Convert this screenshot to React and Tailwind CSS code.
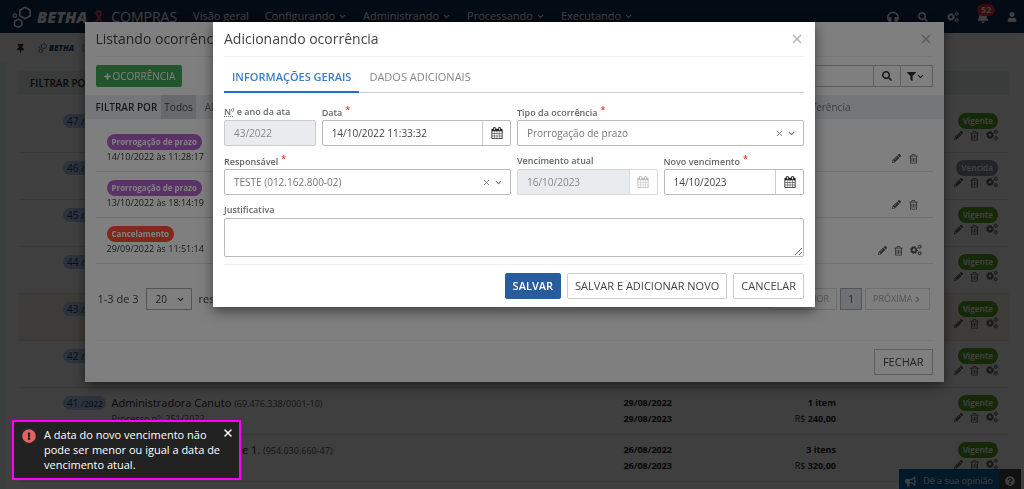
import React, { useState } from 'react';
import { FaBell, FaBullhorn, FaExclamationCircle, FaFilter, FaHeadphones, FaPencilAlt, FaQuestionCircle, FaSearch, FaThumbtack, FaUser } from 'react-icons/fa';
import { ChevronDown, ChevronLeft, ChevronRight, Plus, X } from 'lucide-react';

const menus = ['Configurando', 'Administrando', 'Processando', 'Executando'];

const atas = [
    { number: 47, status: 'Vigente' },
    { number: 46, status: 'Vencida' },
    { number: 45, status: 'Vigente' },
    { number: 44, status: 'Vigente' },
    { number: 43, status: 'Vigente', selected: true },
    { number: 42, status: 'Vigente' },
    { number: 41, status: 'Vigente', supplier: 'Administradora Canuto', document: '69.476.338/0001-10', process: '251/2022', start: '29/08/2022', end: '29/08/2023', items: '1 item', total: '240,00' },
    { number: 40, status: 'Vigente', supplier: 'Fornecedor Exemplo Teste 1.', document: '954.030.660-47', start: '26/08/2022', end: '26/08/2023', items: '3 itens', total: '320,00' },
];

const occurrences = [
    { type: 'Prorrogação de prazo', date: '14/10/2022 às 11:28:17', color: 'bg-[#b565cf]' },
    { type: 'Prorrogação de prazo', date: '13/10/2022 às 18:14:19', color: 'bg-[#b565cf]' },
    { type: 'Cancelamento', date: '29/09/2022 às 11:51:14', color: 'bg-[#ff5338]', canConfigure: true },
];

function TrashIcon({ className }) {
    return (
        <svg viewBox="0 0 1408 1792" fill="currentColor" className={className} aria-hidden="true">
            <path d="M512 800v576q0 14-9 23t-23 9h-64q-14 0-23-9t-9-23v-576q0-14 9-23t23-9h64q14 0 23 9t9 23zm256 0v576q0 14-9 23t-23 9h-64q-14 0-23-9t-9-23v-576q0-14 9-23t23-9h64q14 0 23 9t9 23zm256 0v576q0 14-9 23t-23 9h-64q-14 0-23-9t-9-23v-576q0-14 9-23t23-9h64q14 0 23 9t9 23zm128 724v-948h-896v948q0 22 7 40.5t14.5 27 10.5 8.5h832q3 0 10.5-8.5t14.5-27 7-40.5zm-672-1076h448l-48-117q-7-9-17-11h-317q-10 2-17 11zm928 32v64q0 14-9 23t-23 9h-96v948q0 83-47 143.5t-113 60.5h-832q-66 0-113-58.5t-47-141.5v-952h-96q-14 0-23-9t-9-23v-64q0-14 9-23t23-9h309l70-167q15-37 54-63t79-26h320q40 0 79 26t54 63l70 167h309q14 0 23 9t9 23z" />
        </svg>
    );
}

function CalendarIcon({ className }) {
    return (
        <svg viewBox="0 0 1792 1792" fill="currentColor" className={className} aria-hidden="true">
            <path d="M192 1664h288v-288h-288v288zm352 0h320v-288h-320v288zm-352-352h288v-320h-288v320zm352 0h320v-320h-320v320zm-352-384h288v-288h-288v288zm736 736h320v-288h-320v288zm-384-736h320v-288h-320v288zm768 736h288v-288h-288v288zm-384-352h320v-320h-320v320zm-352-864v-288q0-13-9.5-22.5t-22.5-9.5h-64q-13 0-22.5 9.5t-9.5 22.5v288q0 13 9.5 22.5t22.5 9.5h64q13 0 22.5-9.5t9.5-22.5zm736 864h288v-320h-288v320zm-384-384h320v-288h-320v288zm384 0h288v-288h-288v288zm32-480v-288q0-13-9.5-22.5t-22.5-9.5h-64q-13 0-22.5 9.5t-9.5 22.5v288q0 13 9.5 22.5t22.5 9.5h64q13 0 22.5-9.5t9.5-22.5zm384-64v1280q0 52-38 90t-90 38h-1408q-52 0-90-38t-38-90v-1280q0-52 38-90t90-38h128v-96q0-66 47-113t113-47h64q66 0 113 47t47 113v96h384v-96q0-66 47-113t113-47h64q66 0 113 47t47 113v96h128q52 0 90 38t38 90z" />
        </svg>
    );
}

// one large gear with two small ones on its right
function CogsIcon({ className }) {
    return (
        <svg viewBox="0 0 24 24" fill="none" stroke="currentColor" className={className} aria-hidden="true">
            <circle cx="8" cy="12" r="4.600" strokeWidth="3.400" />
            <circle cx="8" cy="12" r="7" strokeWidth="2" strokeDasharray="2.750 2.750" />
            <circle cx="19.500" cy="5.500" r="2.500" strokeWidth="2" />
            <circle cx="19.500" cy="18.500" r="2.500" strokeWidth="2" />
            <circle cx="19.500" cy="5.500" r="4" strokeWidth="1.200" strokeDasharray="2.100 2.100" />
            <circle cx="19.500" cy="18.500" r="4" strokeWidth="1.200" strokeDasharray="2.100 2.100" />
        </svg>
    );
}

function BethaMark({ className }) {
    return (
        <svg viewBox="0 0 20 22" fill="none" stroke="currentColor" className={className} aria-hidden="true">
            <path d="M13 1.2l5.2 3v5.6l-5.2 3-5.2-3V4.200z" strokeWidth="1.6" />
            <path d="M6.200 13.200l3.600 2.100v4l-3.600 2.100-3.600-2.100v-4z" strokeWidth="1.500" />
            <path d="M2.800 7.800l1.600.9v1.900l-1.600.9-1.600-.9V8.700z" strokeWidth="1.200" />
        </svg>
    );
}

function RibbonIcon() {
    return (
        <svg viewBox="0 0 10 14" fill="none" stroke="#f0507a" strokeWidth="2" className="w-[10px] h-[14px]" aria-hidden="true">
            <path d="M9 13.500L3 5C1.800 3 2.500 1.200 4.600 1.200S7.600 3 6.600 5L1.500 13" />
        </svg>
    );
}

function RowActions({ withCogs }) {
    return (
        <div className={`flex items-center justify-end text-[#555] ${withCogs ? 'gap-[7px]' : 'gap-2 mr-1'}`}>
            <button type="button" aria-label="Editar"><FaPencilAlt className="size-[9px]" /></button>
            <button type="button" aria-label="Excluir"><TrashIcon className="w-[9px] h-[11px]" /></button>
            {withCogs && <button type="button" aria-label="Opções"><CogsIcon className="size-3" /></button>}
        </div>
    );
}

function Navbar() {
    return (
        <header className="flex items-center h-[33px] pl-3 pr-[7px] bg-[#0f2c50] text-white">
            <BethaMark className="w-5 h-[22px]" />
            <span className="ml-[5px] text-[16px] leading-none font-extrabold italic">BETHA</span>
            <span className="ml-[7px]"><RibbonIcon /></span>
            <span className="ml-[7px] text-sm leading-none">COMPRAS</span>
            <nav className="flex items-center gap-4 ml-4 text-[11px]">
                <a href="#">Visão geral</a>
                {menus.map(menu => (
                    <a key={menu} href="#" className="flex items-center gap-[3px]">
                        {menu}
                        <ChevronDown className="size-[9px]" strokeWidth={3} />
                    </a>
                ))}
            </nav>
            <div className="flex items-center gap-[18px] ml-auto">
                <button type="button" aria-label="Suporte"><FaHeadphones className="size-3" /></button>
                <button type="button" aria-label="Buscar"><FaSearch className="size-[10px] mx-px" /></button>
                <button type="button" aria-label="Configurações"><CogsIcon className="size-3" /></button>
                <button type="button" aria-label="Notificações" className="relative">
                    <FaBell className="size-3" />
                    <span className="absolute -top-[7px] left-0 px-1 rounded-full bg-[#e8333a] text-[9px] leading-[12px] font-bold">52</span>
                </button>
                <button type="button" aria-label="Usuário"><FaUser className="size-[10px]" /></button>
            </div>
        </header>
    );
}

function AtaRow({ ata }) {
    return (
        <li className={`flex h-[47px] pl-11 pr-[11px] pt-[7px] border-b border-[#e4e4e4] ${ata.selected ? 'bg-[#f8f1e2]' : ''}`}>
            <span className="h-[14px] mt-px px-1 rounded-full bg-[#b4cdf5] text-[#1d3c6e] text-[10px] leading-[14px] whitespace-nowrap">
                {ata.number} <span className="text-[8px] font-semibold">/2022</span>
            </span>
            <div className="flex-1 ml-[5px] text-[#222]">
                {ata.supplier && (
                    <p className="text-[11px] leading-4">{ata.supplier} <span className="text-[9px] text-[#555]">({ata.document})</span></p>
                )}
                {ata.process && <p className="text-[9px] leading-[14px] text-[#555]">Processo nº: {ata.process}</p>}
            </div>
            <div className="text-right text-[9px] leading-4 font-bold text-[#222]">
                <p>{ata.start}</p>
                <p>{ata.end}</p>
            </div>
            <div className="w-[164px] text-right text-[9px] leading-4 font-bold text-[#222]">
                <p>{ata.items}</p>
                {ata.total && <p><span className="font-normal">R$</span> {ata.total}</p>}
            </div>
            <div className="w-[162px]">
                <span className={`block w-fit ml-auto px-[5px] rounded-full text-[8px] leading-4 font-bold text-white ${ata.status === 'Vencida' ? 'bg-[#8790a5]' : 'bg-[#56a01e]'}`}>{ata.status}</span>
                <RowActions withCogs />
            </div>
        </li>
    );
}

function AtasPage() {
    return (
        <div className="h-screen flex flex-col overflow-hidden bg-white">
            <Navbar />
            <div className="flex items-center h-[30px] pl-4 text-[#23406e]">
                <FaThumbtack className="size-[9px] text-[#333]" />
                <BethaMark className="w-[9px] h-[10px] ml-[13px]" />
                <span className="ml-[2px] text-[8px] font-extrabold italic">BETHA</span>
                <span className="w-2 h-2 ml-2 bg-[#f3c6cf]" />
            </div>
            <div className="flex flex-1 min-h-0">
                <aside className="w-[5px] bg-[#eef3f1]" />
                <main className="flex-1 px-[14px] pt-2 mr-px">
                    <div className="h-6 pl-[11px] mb-[11px] bg-[#e9eeee] text-[10px] leading-6 font-semibold text-[#222]">FILTRAR POR</div>
                    <ul>
                        {atas.map(ata => <AtaRow key={ata.number} ata={ata} />)}
                    </ul>
                </main>
            </div>
            <div className="fixed -bottom-1 right-[3px] flex h-6 text-[9px] text-white">
                <button type="button" className="flex items-center gap-[7px] px-[6px] bg-[#0a66a8]">
                    <FaBullhorn className="size-[11px]" />
                    Dê a sua opinião
                </button>
                <button type="button" aria-label="Ajuda" className="px-[6px] bg-[#444]"><FaQuestionCircle className="size-[10px]" /></button>
            </div>
        </div>
    );
}

function ModalHeader({ title }) {
    return (
        <div className="flex items-center justify-between h-[35px] border-b border-[#f2f2f2]">
            <h2 className="text-sm leading-none text-[#444]">{title}</h2>
            <button type="button" aria-label="Fechar" className="text-[#bbb]"><X className="size-[14px]" strokeWidth={3} /></button>
        </div>
    );
}

function OccurrencesModal() {
    return (
        <div className="fixed inset-0 flex items-start justify-center pt-[22px] pl-1 bg-black/50">
            <section className="w-full max-w-[859px] bg-white shadow-[0_4px_12px_rgba(0,0,0,0.5)]">
                <div className="px-[11px]">
                    <ModalHeader title="Listando ocorrências" />
                    <div className="flex justify-between h-[38px] py-2">
                        <button type="button" className="flex items-center gap-px px-[7px] rounded-xs bg-[#44a85b] text-[10px] text-white">
                            <Plus className="size-[9px]" strokeWidth={4} />
                            OCORRÊNCIA
                        </button>
                        <div className="flex text-[#333]">
                            <input type="text" aria-label="Pesquisar ocorrências" className="w-[300px] px-2 border border-[#bbb] text-[10px]" />
                            <button type="button" aria-label="Pesquisar" className="flex items-center justify-center w-[26px] border-y border-[#bbb]"><FaSearch className="size-[10px]" /></button>
                            <button type="button" aria-label="Filtrar" className="flex items-center justify-center w-[33px] border border-[#bbb]">
                                <FaFilter className="size-[9px]" />
                                <ChevronDown className="size-[9px]" strokeWidth={3} />
                            </button>
                        </div>
                    </div>
                </div>
                <div className="flex h-6 pl-[11px] bg-[#e9ecf0] text-[10px] leading-6 text-[#777]">
                    <span className="mr-1 font-semibold text-[#333]">FILTRAR POR</span>
                    <button type="button" className="px-[3px] mr-[9px] bg-[#cfd4da] text-[#444]">Todos</button>
                    <button type="button">Alteração</button>
                    <button type="button" className="ml-auto mr-[93px]">Transferência</button>
                </div>
                <div className="px-[11px] pt-[7px]">
                    <ul>
                        {occurrences.map(item => (
                            <li key={item.date} className="flex items-end justify-between h-[46px] px-[11px] pb-[7px] border-b border-[#e2e2e2]">
                                <div>
                                    <span className={`block w-fit px-[5px] rounded-full text-[8px] leading-4 font-bold text-white ${item.color}`}>{item.type}</span>
                                    <span className="block text-[9px] leading-[14px] text-[#333]">{item.date}</span>
                                </div>
                                <RowActions withCogs={item.canConfigure} />
                            </li>
                        ))}
                    </ul>
                    <div className="flex items-center h-[22px] mt-[24px] mb-[30px] pr-[3px] text-[11px] text-[#444]">
                        <label htmlFor="pageSize" className="pl-[2px]">1-3 de 3</label>
                        <span className="flex items-center h-full mx-[7px] border border-[#aaa] w-[46px]">
                            <select id="pageSize" className="appearance-none w-full pl-[9px] text-[10px]"><option>20</option></select>
                            <ChevronDown className="shrink-0 size-[9px] mr-[6px]" strokeWidth={3} />
                        </span>
                        resultados
                        <div className="flex gap-[3px] h-full ml-auto text-[9px] text-[#aaa]">
                            <button type="button" className="flex items-center px-[7px] border border-[#ddd]"><ChevronLeft className="size-[9px]" strokeWidth={3} />ANTERIOR</button>
                            <button type="button" className="w-[22px] border border-[#aaa] bg-[#dfe3e8] text-[10px] text-[#444]">1</button>
                            <button type="button" className="flex items-center px-[7px] border border-[#ddd]">PRÓXIMA<ChevronRight className="size-[9px]" strokeWidth={3} /></button>
                        </div>
                    </div>
                    <div className="flex justify-end pt-2 pb-[7px] border-t border-[#f0f0f0]">
                        <button type="button" className="h-[26px] px-2 border border-[#bbb] text-[11px] text-[#444]">FECHAR</button>
                    </div>
                </div>
            </section>
        </div>
    );
}

function Field({ id, label, required, className, children }) {
    return (
        <div className={className}>
            <label htmlFor={id} className="block h-[15px] text-[9px] leading-[14px] font-semibold text-[#666]">
                {label}
                {required && <span className="ml-[3px] align-[3px] leading-none text-[#e8352e]">*</span>}
            </label>
            {children}
        </div>
    );
}

function DateInput({ id, defaultValue, disabled }) {
    return (
        <div className={`flex h-[26px] rounded-xs border ${disabled ? 'border-[#d8d8d8]' : 'border-[#bbb]'}`}>
            <input id={id} type="text" defaultValue={defaultValue} disabled={disabled} className="flex-1 min-w-0 px-[9px] text-[10px] text-[#444] disabled:bg-[#e9ebef] disabled:text-[#888]" />
            <button type="button" aria-label="Abrir calendário" disabled={disabled} className="flex items-center justify-center w-7 border-l border-[#ccc] text-[#222] disabled:border-[#ddd] disabled:text-[#bbb]">
                <CalendarIcon className="size-3" />
            </button>
        </div>
    );
}

function Combo({ id, value }) {
    return (
        <div className="flex items-center h-[26px] pr-[7px] rounded-xs border border-[#bbb] text-[#777]">
            <select id={id} className="flex-1 h-full appearance-none pl-[9px] text-[10px]"><option>{value}</option></select>
            <button type="button" aria-label="Limpar" className="mr-[3px]"><X className="size-[9px]" strokeWidth={2.5} /></button>
            <ChevronDown className="size-[9px]" strokeWidth={3} />
        </div>
    );
}

function AddOccurrenceModal() {
    const [tab, setTab] = useState('gerais');
    const tabClass = name => tab === name
        ? 'border-[#1e6fd0] font-semibold text-[#3b7dcc]'
        : 'border-transparent text-[#888]';

    return (
        <div className="fixed inset-0 flex items-start justify-center pt-[22px] pl-1 bg-black/50">
            <section className="w-full max-w-[602px] px-[11px] bg-white shadow-[0_4px_12px_rgba(0,0,0,0.5)]">
                <ModalHeader title="Adicionando ocorrência" />
                <div className="flex h-9 border-b border-[#ccd0d6] text-[11px]">
                    <button type="button" onClick={() => setTab('gerais')} className={`h-9 px-2 pt-[6px] border-b-2 ${tabClass('gerais')}`}>INFORMAÇÕES GERAIS</button>
                    <button type="button" onClick={() => setTab('adicionais')} className={`h-9 px-[10px] pt-[6px] border-b-2 ${tabClass('adicionais')}`}>DADOS ADICIONAIS</button>
                </div>
                <form className="grid grid-cols-12 gap-x-[6px] gap-y-2 pt-3">
                    <Field id="ata" label={<><abbr title="Número" className="underline decoration-dotted">Nº</abbr> e ano da ata</>} className="col-span-2">
                        <input id="ata" type="text" defaultValue="43/2022" disabled className="block w-full h-[26px] px-[9px] rounded-xs border border-[#ccc] bg-[#e9ebef] text-[10px] text-[#888]" />
                    </Field>
                    <Field id="data" label="Data" required className="col-span-4">
                        <DateInput id="data" defaultValue="14/10/2022 11:33:32" />
                    </Field>
                    <Field id="tipo" label="Tipo da ocorrência" required className="col-span-6">
                        <Combo id="tipo" value="Prorrogação de prazo" />
                    </Field>
                    <Field id="responsavel" label="Responsável" required className="col-span-6">
                        <Combo id="responsavel" value="TESTE (012.162.800-02)" />
                    </Field>
                    <Field id="atual" label="Vencimento atual" className="col-span-3">
                        <DateInput id="atual" defaultValue="16/10/2023" disabled />
                    </Field>
                    <Field id="novo" label="Novo vencimento" required className="col-span-3">
                        <DateInput id="novo" defaultValue="14/10/2023" />
                    </Field>
                    <Field id="justificativa" label="Justificativa" className="col-span-12">
                        <textarea id="justificativa" className="block w-full h-[39px] px-2 rounded-xs border border-[#bbb] text-[10px]" />
                    </Field>
                </form>
                <div className="flex justify-end gap-[6px] pt-2 pb-2 mt-[7px] border-t border-[#f0f0f0] text-[11px] text-[#444]">
                    <button type="submit" className="h-[26px] px-[7px] rounded-xs border border-[#285c9a] bg-[#285c9a] font-semibold text-white">SALVAR</button>
                    <button type="button" className="h-[26px] px-[7px] rounded-xs border border-[#ccc]">SALVAR E ADICIONAR NOVO</button>
                    <button type="button" className="h-[26px] px-[7px] rounded-xs border border-[#ccc]">CANCELAR</button>
                </div>
            </section>
        </div>
    );
}

function Toast() {
    return (
        <div role="alert" className="fixed left-3 bottom-[9px] flex items-start w-[229px] h-[60px] pt-[5px] pl-2 pr-[5px] border-2 border-[#ff00ff] bg-[#222] text-[11px] leading-[15px] text-white">
            <FaExclamationCircle className="shrink-0 size-[14px] mt-[2px] text-[#e0635f]" />
            <p className="flex-1 ml-2">A data do novo vencimento não<br />pode ser menor ou igual a data de<br />vencimento atual.</p>
            <button type="button" aria-label="Fechar aviso" className="-ml-3 shrink-0"><X className="size-3" strokeWidth={3} /></button>
        </div>
    );
}

export default function App() {
    return (
        <div className="font-['Open_Sans',sans-serif]">
            <AtasPage />
            <OccurrencesModal />
            <AddOccurrenceModal />
            <Toast />
        </div>
    );
}
